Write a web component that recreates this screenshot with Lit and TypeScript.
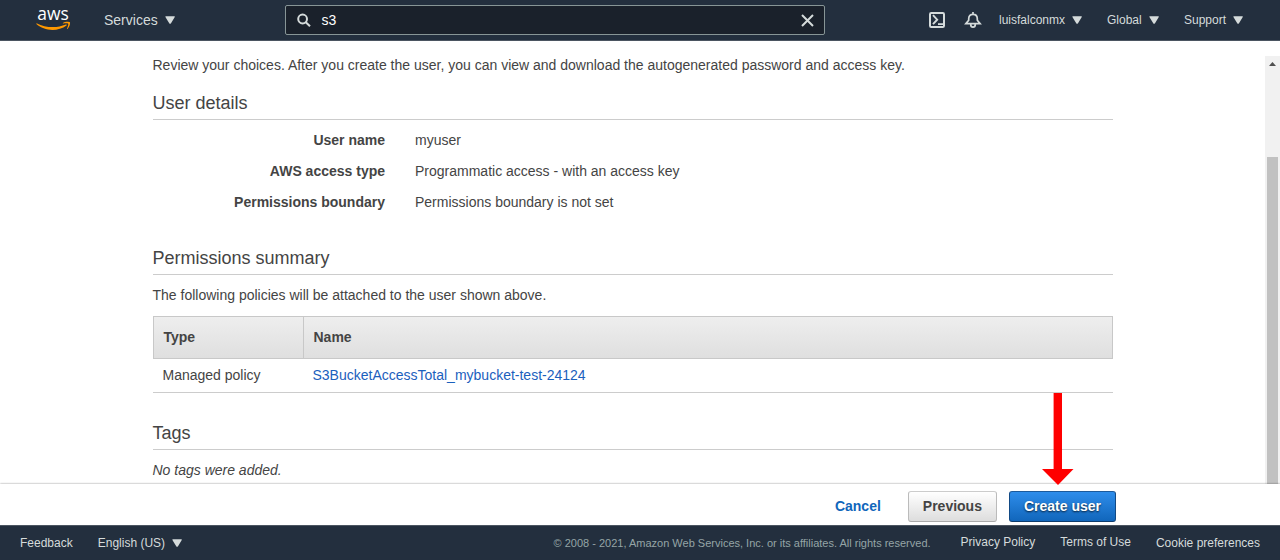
import { LitElement, html, css, svg } from "lit";
import { customElement } from "lit/decorators.js";

const caret = html`<svg class="caret" viewBox="0 0 10 8"><path d="M0.500 0.200H9.700Q9.900 0.800 9.500 1.400L6 7.200Q5.100 8.200 4.200 7.200L0.700 1.400Q0.300 0.800 0.500 0.200Z" /></svg>`;

const details = [
  ["User name", "myuser"],
  ["AWS access type", "Programmatic access - with an access key"],
  ["Permissions boundary", "Permissions boundary is not set"],
];

const smile = svg`
  <path d="M0.6 14.1C4.5 17.4 10.3 19.8 16.5 19.8C21.2 19.8 26.8 18.1 30.5 15.3C31.1 14.9 30.6 14.1 29.9 14.4C25.8 16.1 21.2 17 17.1 17C11 17 5.2 15.6 1.1 13.3C0.6 13 0.2 13.6 0.6 14.1Z" />
  <path d="M32.2 13.6C31.6 12.9 28.5 13.2 27.1 13.4C26.7 13.5 26.6 13.1 27 12.8C29.5 11.1 33.5 11.6 33.9 12.2C34.4 12.7 33.8 16.8 31.5 18.8C31.1 19.1 30.8 18.9 31 18.5C31.5 17.2 32.7 14.3 32.2 13.6Z" />`;

@customElement("app-root")
export class AppRoot extends LitElement {
  static styles = css`
    :host {
      display: flex;
      flex-direction: column;
      position: relative;
      width: 100%;
      height: 560px;
      overflow: hidden;
      box-sizing: border-box;
      background: #fff;
      color: #444;
      font: 14px/20px "Liberation Sans", Arial, sans-serif;
    }
    * { box-sizing: border-box; }
    .topbar {
      display: flex;
      align-items: center;
      flex: none;
      height: 41px;
      background: #232f3e;
      border-bottom: 1px solid #4b5561;
      color: #d5dbdb;
    }
    .logo { display: block; width: 36px; height: 40px; margin-left: 36px; overflow: visible; }
    .word { fill: #fff; font: 500 18.5px "Open Sans", sans-serif; }
    .smile { fill: #f90; }
    .caret { display: block; width: 10px; height: 8px; fill: #d5dbdb; }
    .menu { display: flex; align-items: center; font-size: 12px; }
    .services { width: 181px; margin-left: 32px; gap: 7px; font-size: 14px; }
    .search {
      display: flex;
      align-items: center;
      width: 540px;
      height: 30px;
      padding: 0 9px 0 11px;
      border: 1px solid #879596;
      border-radius: 2px;
      background: #1a212b;
      color: #fff;
    }
    .search svg, .tool { display: block; fill: none; stroke: #d5dbdb; stroke-width: 2; }
    .query { flex: 1; padding-left: 9.5px; }
    .tool { flex: none; width: 18px; height: 18px; }
    .shell { margin-left: 103px; }
    .bell { margin: 0 17px 0 18px; }
    .account { width: 108px; gap: 7px; }
    .region { width: 77px; gap: 7px; }
    .support { gap: 7px; }
    .body { display: flex; justify-content: space-between; flex: none; height: 443px; }
    .content { width: 960px; margin-left: 152.5px; padding-top: 14px; }
    .heading {
      height: 27px;
      margin: 0;
      border-bottom: 1px solid #ccc;
      font-size: 18px;
      font-weight: 400;
      line-height: 20px;
    }
    .para { margin: 0; }
    .details { display: grid; grid-template-columns: 232.5px 1fr; gap: 11px 30px; margin: 10px 0 36px; }
    .term { font-weight: 700; text-align: right; }
    .value { margin: 0; }
    .intro { margin-bottom: 18px; }
    .summary { margin: 10px 0 11px; }
    .table { margin-bottom: 30px; }
    .thead, .row { display: grid; grid-template-columns: 150px 1fr; }
    .thead {
      grid-template-columns: 149.5px 1fr;
      height: 43px;
      border: 1px solid #c8c8c8;
      background: linear-gradient(#eee, #dfdfdf);
      font-weight: 700;
    }
    .th { padding: 10px; }
    .th + .th { border-left: 1px solid #c8c8c8; padding-left: 9.5px; }
    .row { height: 34px; padding: 6px 0; border-bottom: 1px solid #ccc; }
    .td { padding-left: 10px; }
    .link { color: #1b60bd; text-decoration: none; }
    .none { margin-top: 10px; font-style: italic; }
    .scrollbar {
      display: flex;
      flex-direction: column;
      align-items: center;
      width: 15px;
      margin-top: 15px;
      padding: 6px 2px 0;
      background: #f1f1f1;
    }
    .up { display: block; flex: none; width: 7px; height: 4px; fill: #505050; }
    .thumb { width: 11px; flex: 1; margin-top: 91px; background: #c1c1c1; }
    .actions {
      display: flex;
      align-items: flex-start;
      justify-content: flex-end;
      flex: none;
      height: 41px;
      padding: 7px 164px 0 0;
      background: #fff;
      box-shadow: 0 0 2px rgba(0, 0, 0, 0.45);
      z-index: 1;
    }
    .btn {
      height: 31px;
      padding: 0 14px;
      border: 1px solid #bbb;
      border-radius: 3px;
      font: 700 14px/29px "Liberation Sans", Arial, sans-serif;
      color: #444;
    }
    .cancel { padding: 0; border-color: transparent; background: none; color: #1166bb; }
    .previous { margin: 0 12px 0 26px; background: linear-gradient(#fff, #ddd); border-color: #ccc #bbb #aaa; }
    .create {
      border-color: #1c5a9c #124a85 #0d3c6e;
      background: linear-gradient(#2e8deb, #1166bb);
      color: #fff;
      text-shadow: 0 1px 2px rgba(0, 0, 0, 0.75);
    }
    .footer {
      display: flex;
      flex: none;
      height: 35px;
      padding: 8px 20px 0;
      border-top: 1px solid #4b5561;
      background: #232f3e;
      color: #d5dbdb;
      font-size: 12px;
      line-height: 18px;
      position: relative;
      z-index: 2;
    }
    .lang { gap: 7px; height: 18px; margin-left: 25px; }
    .copy { margin-left: auto; color: #95a5a6; font-size: 11px; }
    .policy { margin: -1px 0 0 30px; }
    .terms { margin: -1px 25px 0; }
    .arrow { position: absolute; left: 1042px; top: 393px; width: 32px; height: 92px; fill: #f00; z-index: 3; }
  `;

  render() {
    return html`
      <header class="topbar">
        <svg class="logo" viewBox="0 0 36 40">
          <text class="word" x="1.3" y="20.2" textLength="31.5" lengthAdjust="spacingAndGlyphs">aws</text>
          <g class="smile" transform="translate(0 10.1)">${smile}</g>
        </svg>
        <div class="menu services">Services ${caret}</div>
        <div class="search">
          <svg width="15" height="15" viewBox="0 0 15 15"><circle cx="5.600" cy="6" r="4.400" /><path d="M8.800 9.200L13 13.300" /></svg>
          <span class="query">s3</span>
          <svg width="15" height="15" viewBox="0 0 15 15"><path d="M2 2L13 13M13 2L2 13" /></svg>
        </div>
        <svg class="tool shell" viewBox="0 0 18 18"><rect x="2" y="2" width="14" height="14" rx="1.2" /><path stroke-width="1.900" d="M5 4.200L9.200 8.700L5 13.200M10 13.100H15" /></svg>
        <svg class="tool bell" viewBox="0 0 18 18"><path stroke-width="1.700" d="M1.900 12.600L4.700 9.300V7.700C4.700 4.900 6.500 3.300 9 3.300S13.300 4.900 13.300 7.700V9.300L16.100 12.600ZM6.700 13.200C6.700 17.200 11.300 17.200 11.300 13.200M9 3V1" /></svg>
        <div class="menu account">luisfalconmx ${caret}</div>
        <div class="menu region">Global ${caret}</div>
        <div class="menu support">Support ${caret}</div>
      </header>
      <div class="body">
        <main class="content">
          <p class="para intro">Review your choices. After you create the user, you can view and download the autogenerated password and access key.</p>
          <h2 class="heading">User details</h2>
          <dl class="details">
            ${details.map(([term, value]) => html`<dt class="term">${term}</dt><dd class="value">${value}</dd>`)}
          </dl>
          <h2 class="heading">Permissions summary</h2>
          <p class="para summary">The following policies will be attached to the user shown above.</p>
          <div class="table">
            <div class="thead"><div class="th">Type</div><div class="th">Name</div></div>
            <div class="row"><div class="td">Managed policy</div><div class="td"><a class="link" href="#">S3BucketAccessTotal_mybucket-test-24124</a></div></div>
          </div>
          <h2 class="heading">Tags</h2>
          <p class="para none">No tags were added.</p>
        </main>
        <div class="scrollbar">
          <svg class="up" viewBox="0 0 7 4"><path d="M0 4L3.5 0L7 4Z" /></svg>
          <div class="thumb"></div>
        </div>
      </div>
      <div class="actions">
        <button class="btn cancel">Cancel</button>
        <button class="btn previous">Previous</button>
        <button class="btn create">Create user</button>
      </div>
      <footer class="footer">
        <span>Feedback</span>
        <div class="menu lang">English (US) ${caret}</div>
        <span class="copy">© 2008 - 2021, Amazon Web Services, Inc. or its affiliates. All rights reserved.</span>
        <span class="policy">Privacy Policy</span>
        <span class="terms">Terms of Use</span>
        <span>Cookie preferences</span>
      </footer>
      <svg class="arrow" viewBox="0 0 32 92"><path d="M11.6 0H20V76H31.5L16 92L0 76H11.6Z" /></svg>
    `;
  }
}
